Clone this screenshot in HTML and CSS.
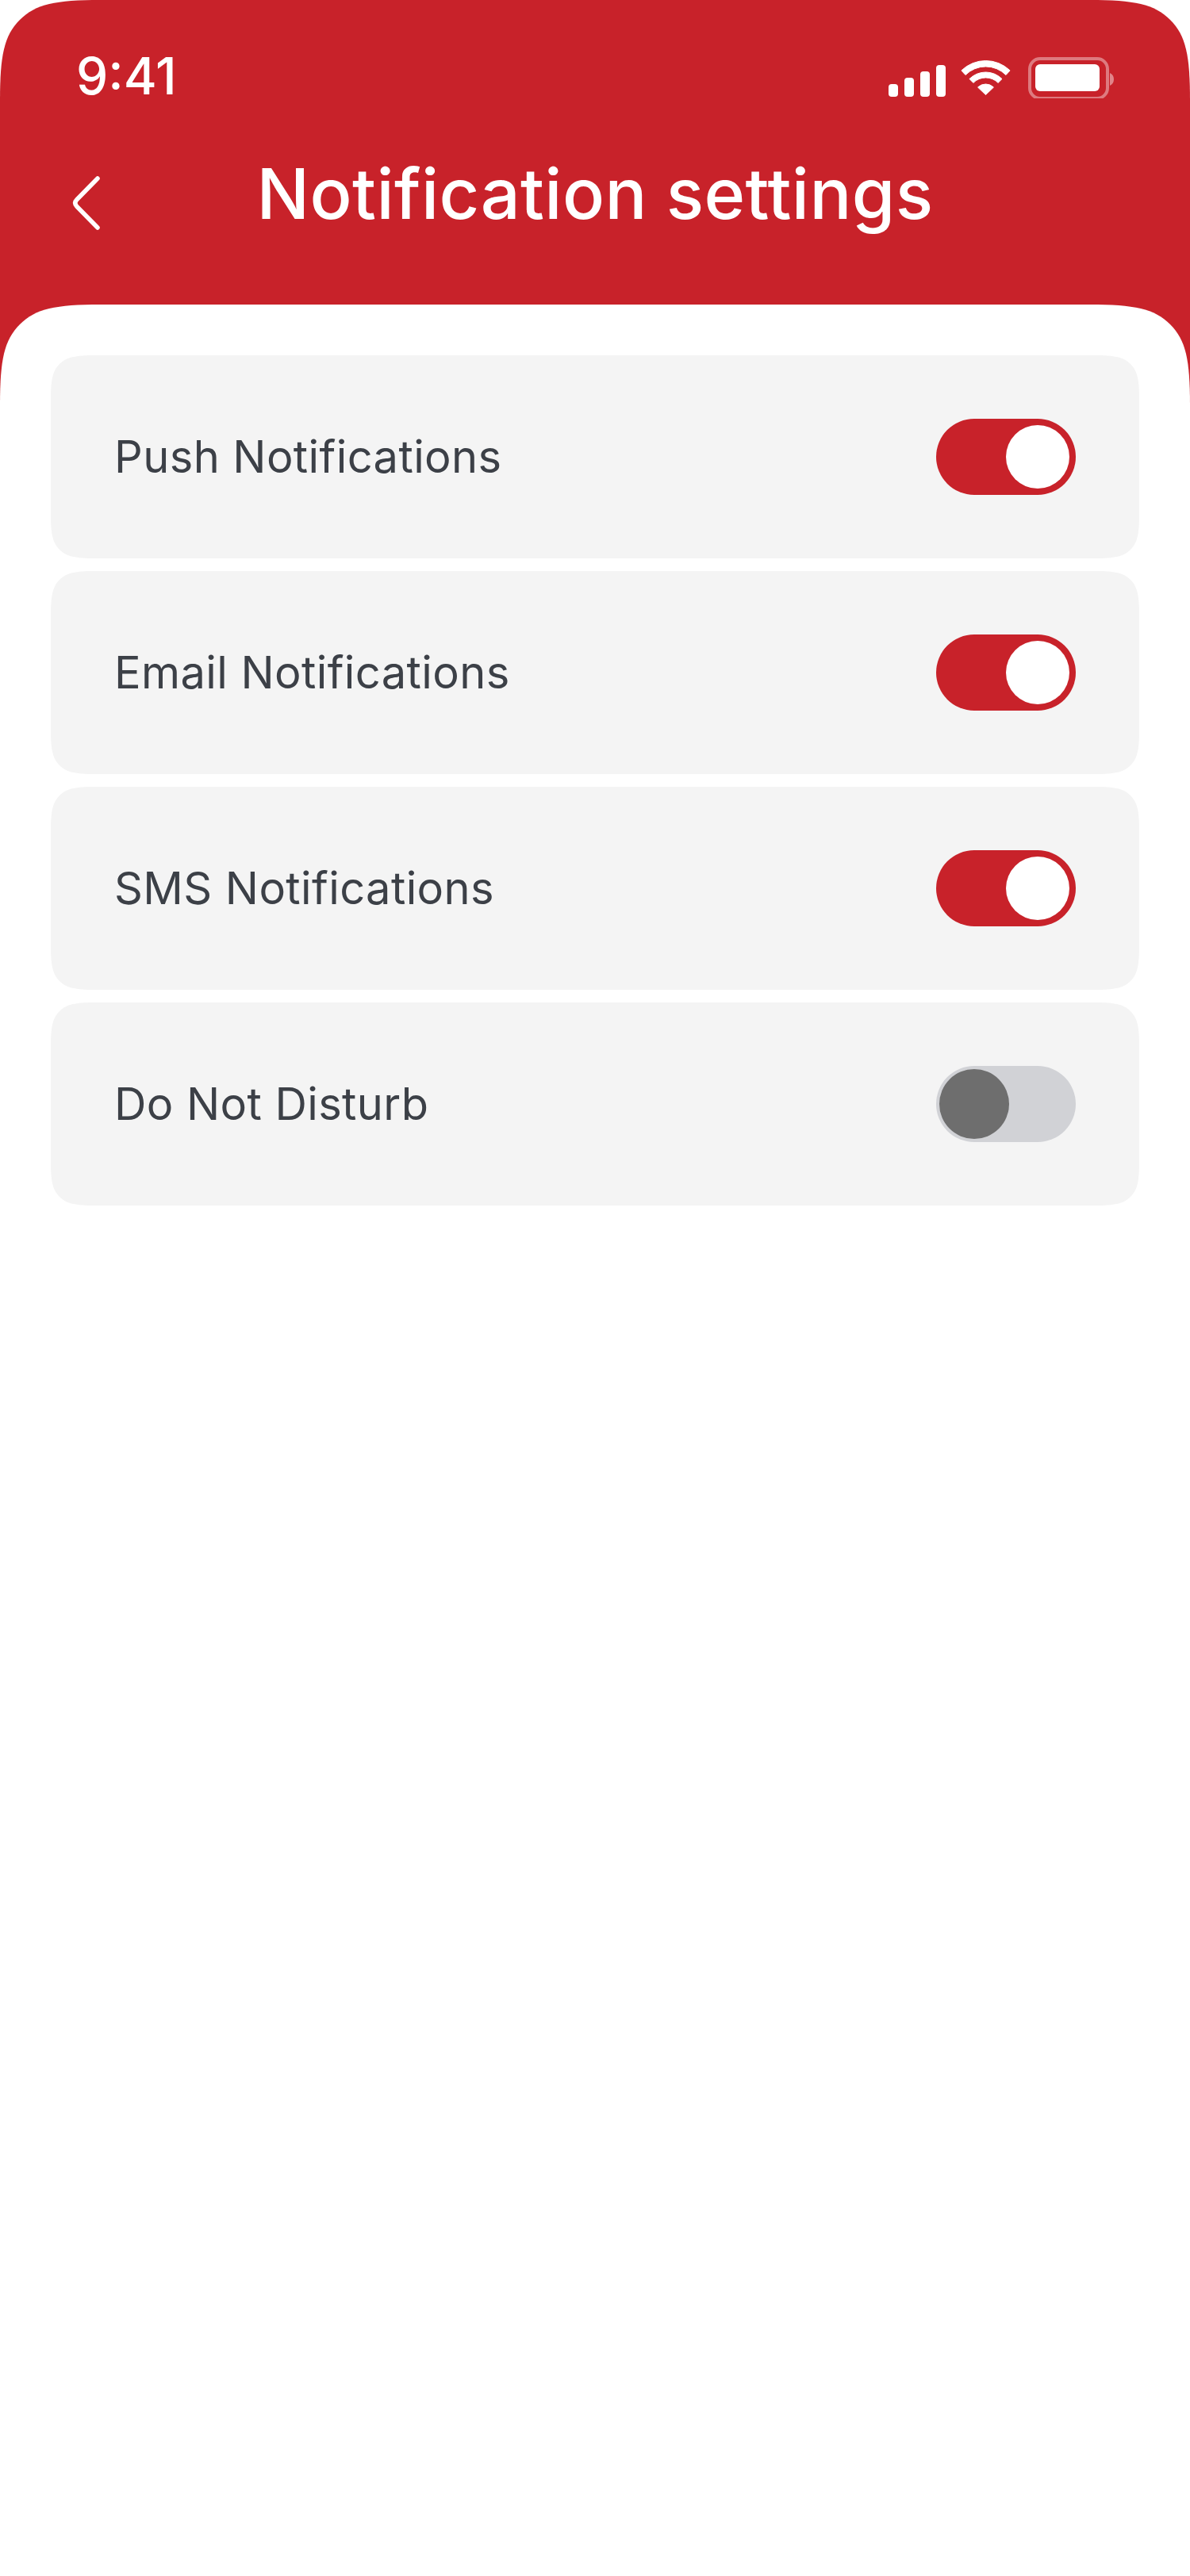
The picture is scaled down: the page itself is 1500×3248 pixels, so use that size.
FILE: index.html
```html
<!DOCTYPE html>
<html lang="en">
<head>
<meta charset="utf-8">
<title>Notification settings</title>
<link rel="stylesheet" href="styles.css">
</head>
<body>
<div class="screen">
  <header class="header">
    <div class="status-bar">
      <span class="time">9:41</span>
      <svg class="status-icons" width="284" height="52" viewBox="0 0 284 52" aria-hidden="true">
        <rect x="0" y="34" width="12" height="16" rx="4" fill="#fff"/>
        <rect x="20" y="26" width="12" height="24" rx="4" fill="#fff"/>
        <rect x="40" y="18" width="12" height="32" rx="4" fill="#fff"/>
        <rect x="60" y="10" width="12" height="40" rx="4" fill="#fff"/>
        <g fill="#fff" stroke="#fff" stroke-width="1" stroke-linejoin="round">
          <path d="M91.900 16.900A44 44 0 0 1 153.100 16.900L148 22.500A36 36 0 0 0 97 22.500Z"/>
          <path d="M102 27.500A29 29 0 0 1 143 27.500L138.100 32.400A22 22 0 0 0 106.900 32.400Z"/>
          <path d="M112.600 38.100A14 14 0 0 1 132.400 38.100L122.500 47.500Z"/>
        </g>
        <rect x="178" y="2" width="98" height="50" rx="13" fill="none" stroke="#fff" stroke-opacity=".4" stroke-width="4"/>
        <rect x="185" y="9" width="81" height="34" rx="6" fill="#fff"/>
        <path d="M279 20V36C282.500 34.500 284 31.500 284 28S282.500 21.500 279 20Z" fill="#fff" fill-opacity=".45"/>
      </svg>
    </div>
    <div class="nav-bar">
      <svg class="back" width="40" height="76" viewBox="0 0 40 76" aria-hidden="true">
        <path d="M33 5L7 31.500Q2.500 36 7 40.500L33 67" fill="none" stroke="#fff" stroke-width="5.500" stroke-linecap="round"/>
      </svg>
      <h1 class="title">Notification settings</h1>
    </div>
  </header>
  <main class="sheet">
    <section class="card"><span class="label">Push Notifications</span><span class="toggle toggle-on"><span class="knob"></span></span></section>
    <section class="card"><span class="label">Email Notifications</span><span class="toggle toggle-on"><span class="knob"></span></span></section>
    <section class="card"><span class="label">SMS Notifications</span><span class="toggle toggle-on"><span class="knob"></span></span></section>
    <section class="card"><span class="label">Do Not Disturb</span><span class="toggle toggle-off"><span class="knob"></span></span></section>
  </main>
</div>
</body>
</html>
```
FILE: styles.css
```css
* { box-sizing: border-box; }
html, body { margin: 0; padding: 0; background: #fff; }
body { font-family: Inter, "Liberation Sans", sans-serif; }
.screen { width: 1500px; height: 3248px; overflow: hidden; background: #fff; }
.header {
  height: 511px;
  background: #c8222a;
  color: #fff;
  clip-path: path("M0 127C0 70 5 45 25 25C45 5 70 0 127 0H1373C1430 0 1455 5 1475 25C1495 45 1500 70 1500 127V511H0Z");
}
.status-bar {
  height: 132px;
  padding: 64px 96px 0;
  display: flex;
  justify-content: space-between;
  align-items: flex-start;
}
.time { font-size: 64px; line-height: 64px; font-weight: 500; }
.status-icons { margin: 8px 0 0; }
.nav-bar {
  display: grid;
  grid-template-columns: 1fr auto 1fr;
  align-items: center;
  height: 110px;
  margin-top: 57px;
  padding: 0 90px;
}
.title { grid-column: 2; margin: 0; font-size: 88px; line-height: 110px; font-weight: 500; letter-spacing: .4px; }
.back { grid-column: 1; grid-row: 1; margin-top: 28px; }
.sheet {
  margin-top: -127px;
  height: 2864px;
  padding: 64px 64px 0;
  background: #fff;
  display: flex;
  flex-direction: column;
  gap: 16px;
  clip-path: path("M0 127C0 70 5 45 25 25C45 5 70 0 127 0H1373C1430 0 1455 5 1475 25C1495 45 1500 70 1500 127V2864H0Z");
}
.card {
  height: 256px;
  padding: 0 80px;
  background: #f4f4f4;
  display: flex;
  justify-content: space-between;
  align-items: center;
  clip-path: path("M0 56C0 30.900 2.200 19.800 11 11C19.800 2.200 30.900 0 56 0H1316C1341.100 0 1352.200 2.200 1361 11C1369.800 19.800 1372 30.900 1372 56V200C1372 225.100 1369.800 236.200 1361 245C1352.200 253.800 1341.100 256 1316 256H56C30.900 256 19.800 253.800 11 245C2.200 236.200 0 225.100 0 200Z");
}
.label { font-size: 56px; line-height: 64px; color: #3c4047; letter-spacing: .4px; }
.toggle { width: 176px; height: 96px; border-radius: 48px; display: flex; align-items: center; }
.toggle-on { background: #c8222a; justify-content: flex-end; padding: 0 8px; }
.toggle-on .knob { width: 80px; height: 80px; background: #fff; }
.toggle-off { background: #d1d2d6; padding: 0 4px; }
.toggle-off .knob { width: 88px; height: 88px; background: #6e6e6e; }
.knob { display: block; border-radius: 50%; }
```
